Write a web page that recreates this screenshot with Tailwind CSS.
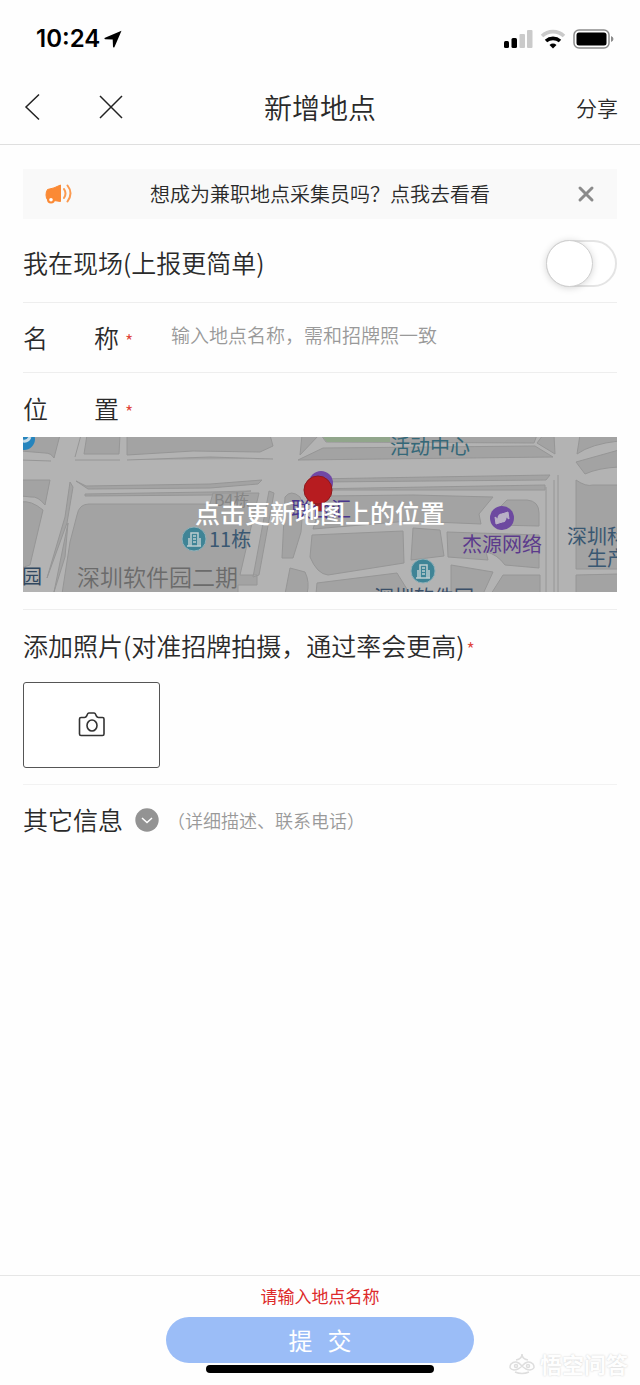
<!DOCTYPE html>
<html lang="zh-CN">
<head>
<meta charset="utf-8">
<meta name="viewport" content="width=device-width, initial-scale=1">
<title>新增地点</title>
<script src="https://cdn.jsdelivr.net/npm/@tailwindcss/browser@4"></script>
</head>
<body class="relative flex min-h-screen flex-col bg-[#fefefe] font-['Noto_Sans_CJK_SC',sans-serif] font-[350] text-[#2a2a2a]">

<!-- Status bar -->
<div class="flex h-[77px] items-center justify-between pr-[26px] pl-9">
  <div class="flex items-center gap-1 font-[Inter,sans-serif] text-2xl font-semibold text-black">
    <span>10:24</span>
    <svg class="size-[18px]" viewBox="0 0 18 18" aria-hidden="true"><path d="M17.500.8 1 7.800c-.8.4-.7 1.300.2 1.400L8.700 9.400 9 16.800c.1.900 1.100 1 1.500.2z"/></svg>
  </div>
  <div class="flex items-center gap-[7px]">
    <svg class="h-5 w-[30px]" viewBox="0 0 30 20" aria-hidden="true">
      <rect x="1" y="12" width="5" height="7" rx="1.500"/><rect x="8.500" y="9" width="5.500" height="10" rx="1.500"/>
      <rect x="16.500" y="5" width="5.500" height="14" rx="1" fill="#cacaca"/><rect x="24" y="1" width="5.500" height="18" rx="1" fill="#cacaca"/>
    </svg>
    <svg class="h-5 w-[26px]" viewBox="0 0 26 20" fill="none" aria-hidden="true">
      <path d="M2 7a16 16 0 0 1 22 0" stroke="#cacaca" stroke-width="3.600"/>
      <path d="M6 12a10.500 10.500 0 0 1 14 0" stroke="#000" stroke-width="3.600"/>
      <path d="M13 19.500 9.500 16q3.500-2.800 7 0z" fill="#000"/>
    </svg>
    <svg class="h-5 w-[41px]" viewBox="0 0 41 20" aria-hidden="true">
      <rect x="1" y="1" width="35" height="18" rx="5" fill="none" stroke="#8c8c8c" stroke-width="1.500"/>
      <rect x="3.500" y="3.500" width="30" height="13" rx="2.500"/>
      <path d="M38 7q2.500.8 2.500 3T38 13z" fill="#8c8c8c"/>
    </svg>
  </div>
</div>

<!-- Navigation -->
<header class="grid h-[68px] grid-cols-[1fr_auto_1fr] items-center border-b border-[#dfdfdf] px-[22px] pb-2">
  <div class="flex items-center gap-[54px]">
    <button type="button" aria-label="返回"><svg class="h-7 w-5" viewBox="0 0 20 28" fill="none" stroke="#222" stroke-width="1.500" aria-hidden="true"><path d="M17 1.500 4 14l13 12.500"/></svg></button>
    <button type="button" aria-label="关闭"><svg class="size-7" viewBox="0 0 28 28" fill="none" stroke="#222" stroke-width="1.500" aria-hidden="true"><path d="M4 3 26 25M26 3 4 25"/></svg></button>
  </div>
  <h1 class="text-[28px] leading-10">新增地点</h1>
  <button type="button" class="justify-self-end text-[21px] leading-8">分享</button>
</header>

<main class="flex-1 px-[23px] pt-6">
  <!-- Notice -->
  <div class="flex h-[50px] items-center bg-[#f9f9f9] pr-5 pl-[22px]">
    <svg class="h-6 w-7" viewBox="0 0 28 24" aria-hidden="true">
      <path d="M15.500 3v16.500L9 18.500H3Q1 16.500 1 13T2.500 7.500Q9 6.500 15.500 3z" fill="#fb8a35" stroke="#fb8a35" stroke-linejoin="round"/>
      <circle cx="6" cy="17.500" r="4" fill="#fb8a35"/><circle cx="6" cy="17.800" r="1.800" fill="#fff"/>
      <path d="M19 7q3 4.500 0 9M22.500 3.500q6 7.500 0 16" fill="none" stroke="#fb9a50" stroke-width="2" stroke-linecap="round"/>
    </svg>
    <a href="#" class="flex-1 pr-2 text-center text-xl">想成为兼职地点采集员吗？点我去看看</a>
    <button type="button" aria-label="关闭提示"><svg class="size-[22px]" viewBox="0 0 22 22" fill="none" stroke="#8b8b8b" stroke-width="3" stroke-linecap="round" aria-hidden="true"><path d="m5 5 12 12M17 5 5 17"/></svg></button>
  </div>

  <!-- On-site switch -->
  <label class="flex h-[84px] items-center justify-between border-b border-[#eee] pt-1">
    <span class="text-[25px]">我在现场(上报更简单)</span>
    <span class="relative mt-0.5 h-[47px] w-[71px]">
      <input type="checkbox" role="switch" class="peer block size-full appearance-none rounded-full border-2 border-[#e4e4e4] bg-white checked:bg-[#9bbdf7]">
      <span class="pointer-events-none absolute top-0 left-0 size-[47px] rounded-full border border-[#cfcfcf] bg-white shadow-[0_1px_7px_rgba(0,0,0,0.17)] peer-checked:left-6"></span>
    </span>
  </label>

  <!-- Name -->
  <div class="flex h-[70px] items-center border-b border-[#eee]">
    <label for="place-name" class="flex w-[148px] items-center text-[25px]"><span class="flex w-24 justify-between"><span>名</span><span>称</span></span><span class="pt-1 pl-[6px] text-lg text-[#e0453a]">*</span></label>
    <input id="place-name" type="text" placeholder="输入地点名称，需和招牌照一致" class="mb-1 min-w-0 flex-1 bg-transparent text-[19px] outline-none placeholder:text-[#999]">
  </div>

  <!-- Location -->
  <section class="border-b border-[#eee] pb-[17px]">
    <div class="flex h-16 items-center pt-2 text-[25px]"><span class="flex w-24 justify-between"><span>位</span><span>置</span></span><span class="pt-1 pl-[6px] text-lg text-[#e0453a]">*</span></div>
    <button type="button" class="relative block h-[155px] w-full overflow-hidden bg-[#b3b3b3]">
      <svg class="size-full" viewBox="0 0 594 155" preserveAspectRatio="xMidYMid slice" aria-hidden="true">
        <rect width="594" height="155" fill="#b3b3b3"/>
        <g fill="#a3a3a3" stroke="#969696" stroke-linejoin="round">
          <path d="M-2-2H37L31 21Q28 16 22 16L-2 14zM-2 23 28 24M64-2H97L96 17H61zM58-2 52 20M52 23H97M104-2H247L250 9 237 15 170 14 104 18zM104 23 187 20 250 22"/>
          <path d="M-2 43H27L22 68Q15 59 8 60L-2 59zM-2 65Q8 63 20 73L7 128-2 131z"/>
          <path d="M47 45 42 80 24 141 36 108 44 86 50 50zM45 86 31 155 42 120z"/>
          <path d="M53 44 63 49 187 47 239 43 235 47 187 51 65 52zM62 57 187 55 228 54 189 58 62 59z"/>
          <path d="M66 67H187L190 56H236L217 138H234V148H215V157H39L47 105 54 78Q56 67 66 67zM246 54 230 140 236 138 251 56z"/>
          <path d="M262 60Q268 52 277 60L280 70 278 95 270 121 259 121zM267 131 282 135Q287 145 284 157H262z"/>
          <path d="M279-2H296L277 18zM298-2H514L511 6 303 5zM275 23 300 11 512 9 530 20z"/>
          <path d="M288 42 527 38 523 43 296 45zM286 52 522 48V53L302 53 290 58z"/>
          <path d="M300 59 390 58 470 60 456 77 458 87 386 84 290 92zM484 63H504Q516 64 516 76V89L470 88V77z"/>
          <path d="M289 98 380 94 381 126 305 138Q294 137 287 120zM294 146 374 136 387 157H293z"/>
          <path d="M390 91 417 93 421 119 388 123zM424 95 516 98V131L482 128Q474 117 463 115L465 123 425 120zM428 128 470 135 460 157H428zM480 138H517V157H468z"/>
          <path d="M523 50V157M531 43V157M535 38V157M520-2H531L532 17 514 6z"/>
          <path d="M557-2H596V4Q568 7 554 17zM553 25 596 13V30Q575 31 562 37zM553 43Q563 50 570 48H596V132H553zM553 138 596 137V157H553z"/>
        </g>
        <path d="M300 0H367V5H304z" fill="#91a68b"/>
        <circle cx="1" cy="2" r="11" fill="#2584bd"/><path d="M0 4q5 1 7-4" fill="none" stroke="#c7dce8" stroke-width="3"/>
        <g fill="#3f8496" stroke="#8fb0b8" stroke-width="1"><circle cx="171" cy="102" r="12"/><circle cx="400" cy="134" r="12"/></g>
        <g id="tower" fill="none" stroke="#bdcdd0" stroke-width="1.500"><path d="M164 109h14M168 109V96h7v13M166 109v-8M177 109v-8M170 99h3M170 102h3M170 105h3"/></g>
        <use href="#tower" x="229" y="32"/>
        <circle cx="479" cy="81" r="12" fill="#6d49a0"/><circle cx="479" cy="81" r="4.500" fill="#b9b0c6"/><path d="m472 80 1 7 6-2zM486 82l-1-7-6 2z" fill="#b9b0c6" stroke="#b9b0c6"/>
        <circle cx="298" cy="46" r="12" fill="#7048a5"/>
        <g font-size="20" font-weight="400">
          <text x="367" y="17" fill="#356878">活动中心</text>
          <text x="186" y="110" fill="#3a5872">11栋</text>
          <text x="439" y="115" fill="#5b3a8c">杰源网络</text>
          <text x="544" y="107" fill="#3a5872">深圳科技</text>
          <text x="564" y="129" fill="#3a5872">生产</text>
          <text x="351" y="168" fill="#3a4f68">深圳软件园</text>
          <text x="-1" y="147" fill="#30475f">园</text>
          <text x="54" y="149" font-size="23" fill="#6b6b6b" font-weight="350">深圳软件园二期</text>
          <text x="191" y="69" font-size="16" fill="#858585">B4栋</text>
          <text x="268" y="80" fill="#49358c">联合汇</text>
        </g>
        <path d="M291 64h8l1 10h-6z" fill="#9c2025"/><circle cx="295" cy="53" r="14" fill="#b71c20" stroke="#8d1a1d"/>
      </svg>
      <span class="absolute inset-0 flex items-center justify-center pb-1 text-[25px] font-medium text-white">点击更新地图上的位置</span>
    </button>
  </section>

  <!-- Photos -->
  <section class="border-b border-[#f2f2f2] pb-4">
    <div class="flex h-[72px] items-center text-[25px]">添加照片(对准招牌拍摄，通过率会更高)<span class="pt-1 pl-0.5 text-lg text-[#e0453a]">*</span></div>
    <button type="button" aria-label="添加照片" class="flex h-[86px] w-[137px] items-center justify-center rounded-[3px] border border-[#555] bg-white">
      <svg class="size-7" viewBox="0 0 28 28" fill="none" stroke="#333" stroke-width="1.600" stroke-linejoin="round" aria-hidden="true"><path d="M3 6.500H6.500q1.500 0 2.200-1.600Q9.700 2 11 2h5q1.300 0 2.300 2.900Q19 6.500 20.500 6.500h4q1.500 0 1.500 1.500v15q0 1.500-1.500 1.500h-21.500Q1.500 24.500 1.500 23v-15Q1.500 6.500 3 6.500z"/><ellipse cx="14" cy="14.500" rx="5" ry="5.500"/></svg>
    </button>
  </section>

  <!-- Other details -->
  <button type="button" class="flex h-[70px] items-center">
    <span class="text-[25px]">其它信息</span>
    <svg class="ml-3 size-6" viewBox="0 0 24 24" aria-hidden="true"><circle cx="12" cy="12" r="11.700" fill="#939393"/><path d="m7 10 5 4.500 5-4.500" fill="none" stroke="#fff" stroke-width="1.500"/></svg>
    <span class="ml-2 text-[18px] text-[#999]">（详细描述、联系电话）</span>
  </button>
</main>

<footer class="flex flex-col items-center border-t border-[#e6e6e6] pt-2 pb-3">
  <p class="text-[17px] leading-6 font-normal text-[#dd2a2a]" role="alert">请输入地点名称</p>
  <button type="submit" class="mt-[9px] flex h-[46px] w-[48%] items-center justify-center gap-[15px] rounded-full bg-[#9bbdf7] text-2xl font-normal text-white"><span>提</span><span>交</span></button>
  <div class="mt-0.5 h-2 w-[228px] rounded-full bg-black"></div>
</footer>

<!-- Watermark -->
<div class="absolute right-3 bottom-2 flex items-center gap-1 text-[22px] leading-7 font-bold text-[#fefefe] [text-shadow:0_0_2px_#ccc]">
  <svg class="h-6 w-7" viewBox="0 0 28 24" fill="none" stroke="#dedede" stroke-width="1.500" aria-hidden="true"><path d="M8 9q6-1 6-6 0 5 6 6M14 15q-6-7-11-2-3 5 3 6 4 0 8-4 6-7 11-2 3 5-3 6-4 0-8-4M7 21q7 3 14 0"/><circle cx="8" cy="15" r="1.500"/><circle cx="20" cy="15" r="1.500"/></svg>
  <span>悟空问答</span>
</div>
</body>
</html>
